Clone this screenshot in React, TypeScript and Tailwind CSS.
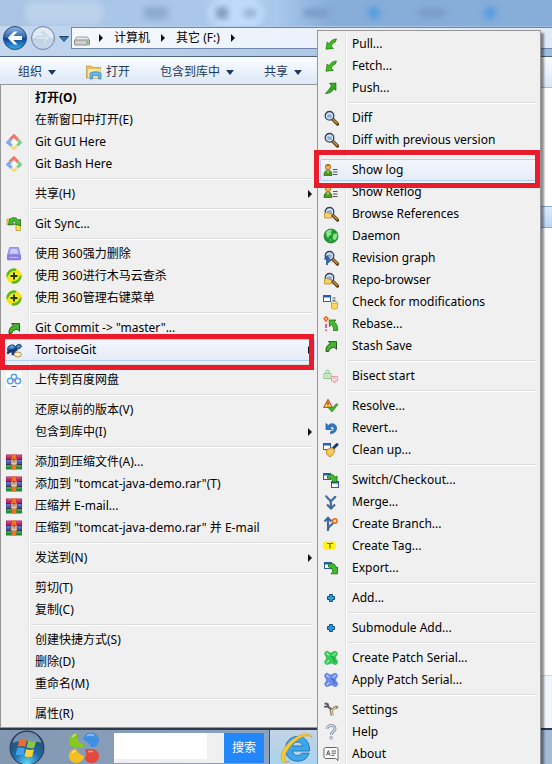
import React from "react";
import clsx from "clsx";

const Svg = ({ children }: { children: React.ReactNode }) => (
  <svg viewBox="0 0 16 16" className="h-4 w-4 shrink-0" aria-hidden="true">
    {children}
  </svg>
);

/* ---------- shared pieces of the icons ---------- */

const Glass = () => (
  <>
    <path d="M9.5 9l5 5" stroke="#5b3a12" strokeWidth="3.2" strokeLinecap="round" />
    <path d="M10 9.2l4 4" stroke="#c9903f" strokeWidth="1.6" strokeLinecap="round" />
    <circle cx="6.5" cy="5.8" r="4.3" fill="#d3e6f8" stroke="#34435a" strokeWidth="1.3" />
    <path d="M4.3 5.2h4.4M4.3 7h4.4" stroke="#5d83b5" strokeWidth="1" />
  </>
);

const Window = ({ x, y }: { x: number; y: number }) => (
  <g>
    <rect x={x + 0.5} y={y + 0.5} width="7" height="6" fill="#fff" stroke="#2f5f9e" />
    <rect x={x} y={y} width="8" height="2.5" fill="#2360a8" />
  </g>
);

const Patch = ({ fill, dark, light }: { fill: string; dark: string; light: string }) => (
  <Svg>
    <path
      d="M3.4 1.3c1.6-.6 2.7 1.8 4.4 1.8 2 0 2.6-2.3 4.8-1.6 2.4.8 1.9 3 .6 4.5-.8 1-.7 2.6.4 3.8 1.5 1.8 1.3 4-.7 4.6-2 .6-3-1.4-4.6-1.4-1.9 0-3 2.1-5 1.3-2.3-.9-1.5-3.3-.4-4.5.9-1 .9-2.3-.2-3.6C1.300 4.400 1.300 2 3.400 1.300z"
      fill={fill}
      stroke={dark}
      strokeWidth=".6"
    />
    <path d="M3.500 3l2.500 2.500M12.500 3L10 5.500M3.800 13l2.400-2.700" stroke={light} strokeWidth="1.400" />
    <path d="M8 6.500a2.600 2.600 0 0 1 2.800 2.700c0 1.500.8 2 1.500 3" fill="none" stroke={dark} strokeWidth="1.200" />
  </Svg>
);

/* ---------- menu icons ---------- */

const DownLeftIcon = () => (
  <Svg>
    <path
      d="M13.400 3c-3.800.2-6.100 1.900-7 4.900L4.200 6 3 13.200l7.400-.8-2.200-1.900c.5-2.500 2.100-3.900 4.200-4.600z"
      fill="#3fbf1f"
      stroke="#257a12"
      strokeWidth=".8"
      strokeLinejoin="round"
    />
  </Svg>
);

const PushIcon = () => (
  <Svg>
    <path
      d="M2.500 13.500c4.400-.1 7-1.900 8.200-4.700l2.200 1.500V3L6.500 3.400l1.900 2C7.500 8.200 5.600 9.800 2.500 13.500z"
      fill="#35a822"
      stroke="#1f6e12"
      strokeWidth=".8"
      strokeLinejoin="round"
    />
  </Svg>
);

const CommitIcon = () => (
  <Svg>
    <path
      d="M3 13.500C2.600 9.600 4.300 7 7.400 5.800L5.500 3.600h8v7.700l-2.200-2.100C8.300 9.600 6.500 10.700 5.600 13.500z"
      fill="#45b52f"
      stroke="#1c4d12"
      strokeWidth=".9"
      strokeLinejoin="round"
    />
  </Svg>
);

const DiffIcon = () => (
  <Svg>
    <Glass />
  </Svg>
);

const BrowseIcon = () => (
  <Svg>
    <Glass />
    <path d="M1.500 7.500l1.500-1h2l1 1h2.500v4.500h-7z" fill="#f7cf63" stroke="#b98218" strokeWidth=".7" />
  </Svg>
);

const RevisionIcon = () => (
  <Svg>
    <Glass />
    <path d="M4 15V7M1.500 9.500L4 6.500l2.500 3M4 13l3.500-3" fill="none" stroke="#2f5fa5" strokeWidth="1.800" />
  </Svg>
);

const LogIcon = () => (
  <Svg>
    <circle cx="5" cy="5" r="2.700" fill="#f2b25c" stroke="#a4641c" strokeWidth=".7" />
    <path d="M2.500 4.500C2.500 2 7.500 1.500 7.500 4L5 3.700z" fill="#9b6a1c" />
    <path d="M1 13.500C1 9.500 2.800 8.200 5 8.200s4 1.300 4 5.300z" fill="#4f9a25" stroke="#2c5a12" strokeWidth=".7" />
    <path d="M4 8.500l1 3 1-3z" fill="#fbe36c" />
    <path d="M10 7.500h4.500M10 10h4.500M10 12.500h4.500" stroke="#555" strokeWidth="1" />
  </Svg>
);

const DaemonIcon = () => (
  <Svg>
    <circle cx="8" cy="8" r="7" fill="#1d9c32" stroke="#136b22" strokeWidth=".7" />
    <path
      d="M3 4c2-2.500 4.500-2.700 6-2L7.500 4.500 9 6l-2.500 1.500L5 10 3.500 7.500zM10.500 6l3.500-.5c1 3-.5 5.500-2.500 7L9.500 10z"
      fill="#8ee48c"
    />
    <path d="M6.500 10.500l2 1-.8 2.500z" fill="#64cf68" />
  </Svg>
);

const ModificationsIcon = () => (
  <Svg>
    <Window x={0} y={1} />
    <path d="M9.500 4h3M9.500 6.300h3" stroke="#555" />
    <path d="M8.500 8.500c0-1 6-1 6 0V14c0 1.300-6 1.300-6 0z" fill="#fbdc62" stroke="#c19523" strokeWidth=".8" />
    <ellipse cx="11.500" cy="8.600" rx="3" ry="1" fill="#fdf0ae" stroke="#c19523" strokeWidth=".6" />
  </Svg>
);

const RebaseIcon = () => (
  <Svg>
    <circle cx="3" cy="2.800" r="1.600" fill="#ffe3a0" stroke="#e2611c" strokeWidth="1.300" />
    <path d="M3 0v1M.3 2.800h1M3 5v1.500M5 2.800h1" stroke="#e2611c" />
    <path d="M3 8v4M3 13.500v1.500" stroke="#e02460" strokeWidth="1.400" />
    <path
      d="M6.200 4h6.600l-1.700 2c2.200 1 3.600 3.500 3.600 8.500h-4.200c.2-3.200-.4-4.800-1.800-5.800L6.500 10.500z"
      fill="#46b92f"
      stroke="#22701a"
      strokeWidth=".8"
    />
  </Svg>
);

const BisectIcon = () => (
  <Svg>
    <path d="M1 5.500h7v5H1zM3 5.500V3c0-1.500 3-1.500 3 0v2.500" fill="#d5efd4" stroke="#8ccb8b" />
    <path d="M8.500 8.500h6v4.500h-2l-1 2-1-2h-2z" fill="#fbe3e3" stroke="#e79a9a" />
    <path d="M10.500 10h2M3.500 8h2" stroke="#c88" strokeWidth=".8" />
  </Svg>
);

const ResolveIcon = () => (
  <Svg>
    <path d="M5 1.500L.8 9.500h8.600z" fill="#ffe14a" stroke="#c8502c" strokeWidth="1.200" strokeLinejoin="round" />
    <path d="M5 4v3M5 7.800v1" stroke="#6b1e10" strokeWidth="1.100" />
    <path d="M5.500 10l3.500 4 6-7.500-1.800-.8L9 10.500 7.500 8.800z" fill="#43b82c" stroke="#207515" strokeWidth=".6" />
  </Svg>
);

const RevertIcon = () => (
  <Svg>
    <path
      d="M3 3.500v6h6L7 7.500c1.500-1.500 4-1 4 1 0 1.500-1.200 2.600-3.500 3.200v2c4-.5 6-2.500 6-5.500 0-4.500-5-6-8.300-2.600z"
      fill="#2e7dc8"
      stroke="#15508c"
      strokeWidth=".7"
      strokeLinejoin="round"
    />
  </Svg>
);

const CleanIcon = () => (
  <Svg>
    <Window x={0} y={1} />
    <path d="M9.500 7L14 2.500" stroke="#1c3b75" strokeWidth="3" strokeLinecap="round" />
    <path d="M3 8l6-2.500 3 2.800-2 4.200-3 2.500-3.200-2.500z" fill="#f7c14a" stroke="#b57a1a" strokeWidth=".8" />
    <path d="M5 9l4 3.500M7 8l3.500 3" stroke="#fbe29a" strokeWidth=".8" />
  </Svg>
);

const SwitchIcon = () => (
  <Svg>
    <Window x={0} y={1} />
    <Window x={8} y={9} />
    <path
      d="M4.500 4c3.500-2.500 6.500-1.500 7.500 1.200L14 4v6H8l2-1.700C9 6.500 7.500 6 4.500 6.500z"
      fill="#46b92f"
      stroke="#1d6815"
      strokeWidth=".8"
    />
  </Svg>
);

const MergeIcon = () => (
  <Svg>
    <path d="M3 1.500c.3 3 4.800 3.500 4.800 7V14M12.500 2c-.3 2.500-4 3-4.500 5.500" fill="none" stroke="#41699f" strokeWidth="2.200" />
    <path d="M4 10.500l4 4 4-4" fill="none" stroke="#41699f" strokeWidth="2.200" />
  </Svg>
);

const BranchIcon = () => (
  <Svg>
    <path d="M5 15V2M1.500 5.500L5 1.800l3.500 3.700M5.500 12.500c0-3 3.700-3 4.300-5.500" fill="none" stroke="#41699f" strokeWidth="2.200" />
    <circle cx="11.800" cy="5" r="2.200" fill="#ffdfa3" stroke="#e0691d" strokeWidth="1.500" />
  </Svg>
);

const TagIcon = () => (
  <Svg>
    <path d="M2 3h9l2.500 4.500L11 12H2L0 10V5z" fill="#fff318" />
    <path d="M4 5.500h6M7 5.500v5" stroke="#6c6710" strokeWidth="1.200" />
  </Svg>
);

const ExportIcon = () => (
  <Svg>
    <Window x={1} y={2} />
    <path
      d="M5.500 4.500C10 2.500 12.500 4 12.800 7.500L14.500 7v6.800H8l1.700-2C9.700 9 8.500 7.500 5.500 7z"
      fill="#46b92f"
      stroke="#1d6815"
      strokeWidth=".8"
    />
  </Svg>
);

const AddIcon = () => (
  <Svg>
    <path d="M6.500 4.500h3v2h2v3h-2v2h-3v-2h-2v-3h2z" fill="#2d9bd8" stroke="#12507f" />
  </Svg>
);

const CreatePatchIcon = () => <Patch fill="#35cf58" dark="#1d9c3c" light="#8bef9c" />;
const ApplyPatchIcon = () => <Patch fill="#6a8eee" dark="#4161c4" light="#b7c9ff" />;

const SettingsIcon = () => (
  <Svg>
    <path d="M1.500 1.500l3 .5 1 3 3 2.500 1 5.500" fill="none" stroke="#6a6259" strokeWidth="2.200" />
    <path d="M9 13.500L8 8.500l5-3.500 2 .8" fill="none" stroke="#8f8268" strokeWidth="2.800" />
    <path d="M9.500 13.500L8.500 8.800 13 5.500" fill="none" stroke="#e5dbbd" strokeWidth="1.200" />
    <path d="M1 4.500L3.500 5 5 3" fill="none" stroke="#494f63" strokeWidth="1.400" />
  </Svg>
);

const HelpIcon = () => (
  <Svg>
    <path d="M4 5c0-5 8.500-4.500 8 0-.3 2.500-3.700 3-3.700 5.800" fill="none" stroke="#7d8a99" strokeWidth="2.800" />
    <path d="M4 5c0-5 8.500-4.500 8 0-.3 2.500-3.700 3-3.700 5.800" fill="none" stroke="#dfe8f1" strokeWidth="1.200" />
    <circle cx="8.200" cy="13.700" r="1.300" fill="#dfe8f1" stroke="#7d8a99" strokeWidth=".8" />
  </Svg>
);

const AboutIcon = () => (
  <Svg>
    <path d="M3 1.500h10.500c1 0 1.500.6 1.500 1.500v11.500l-2.500-2H3c-1.200 0-2-.7-2-1.700V3.200c0-1 .8-1.700 2-1.700z" fill="#fff" stroke="#666" />
    <path d="M3.500 9.500l1.800-5 1.800 5M4.200 8h2.300M8.500 5h4.500M8.500 7.200h4.500M8.500 9.400h3" fill="none" stroke="#444" strokeWidth=".9" />
  </Svg>
);

const GitIcon = () => (
  <Svg>
    <path d="M3.500 6L8 1.800 12 6" fill="none" stroke="#f0776b" strokeWidth="3" />
    <path d="M4.800 5.800L1.800 8.500l4 3.300" fill="none" stroke="#82a9ee" strokeWidth="3" />
    <path d="M11.500 5.500l3 3-3.300 3" fill="none" stroke="#79cf86" strokeWidth="2.800" />
    <path d="M5 12.500l3 2.300 3-2.800" fill="none" stroke="#f9dc78" strokeWidth="2.600" />
    <path d="M8 6v5M8 7l2.500 2" stroke="#fff" strokeWidth="1.300" />
  </Svg>
);

const SyncIcon = () => (
  <Svg>
    <path d="M1 3h4v5.500H1zM10 8.500h4.500v6H10z" fill="#f9e45a" stroke="#b59a1c" strokeWidth=".8" />
    <path d="M3.500 3.500C7 .5 11 1.500 12 4l2.500-.5v6.200L8.500 8l1.800-1.500C9 5 7.500 5 6.500 5.800L8 8.500 2.500 9z" fill="#46b92f" stroke="#1d6815" strokeWidth=".8" />
  </Svg>
);

const ShredIcon = () => (
  <Svg>
    <path d="M3.500 1.500h9l1.500 6v5.500H2V7.500z" fill="#a6a0f2" stroke="#8a83dc" strokeWidth=".8" />
    <path d="M1 8.500h14v4.500c0 .8-.6 1.200-1.300 1.200H2.300c-.7 0-1.300-.4-1.300-1.200z" fill="#847cdf" />
    <path d="M5 3h6l1 4.500H4z" fill="#cfccfa" />
    <path d="M3.500 11.500h9" stroke="#bdb8f6" strokeWidth="1.200" />
  </Svg>
);

const Shield360Icon = () => (
  <Svg>
    <circle cx="8" cy="8" r="7.600" fill="#f8e00c" />
    <path d="M.6 9.500A7.600 7.600 0 0 1 10.500.8L9 4C5 3.500 3.500 6 .6 9.500zM15.400 6.500a7.600 7.600 0 0 1-9.900 8.700L7 12c4 .5 5.500-2 8.400-5.500z" fill="#5ab81e" />
    <circle cx="8" cy="8" r="5" fill="#fbe81c" />
    <path d="M8 4.500v7M4.500 8h7" stroke="#213d10" strokeWidth="2" />
  </Svg>
);

const TortoiseIcon = () => (
  <Svg>
    <path d="M1.500 6.500C2.500 3 7 1.500 9.500 4.500l1 2.500-8 2z" fill="#2d6fb8" stroke="#102a52" strokeWidth=".9" />
    <path d="M9.800 5c.5-3 5-3.600 5.500-1 .1 1.800-1.700 2.500-3.800 3.300z" fill="#3f87cc" stroke="#102a52" strokeWidth=".9" />
    <path d="M1 8l9.500-1.500 1 2L9 10l-1.500 3.500-2-.5.300-2.500-2.300.5-1.500 1.500L.5 11l1-1.500z" fill="#163a70" />
    <path d="M3.500 5.500l2-1.500 2.500 1M5.500 4l.5 3" fill="none" stroke="#8fc3ec" strokeWidth=".7" />
    <ellipse cx="11.800" cy="12.500" rx="3.600" ry="2.500" fill="#f9ecc0" stroke="#b1823b" strokeWidth=".9" />
  </Svg>
);

const BaiduIcon = () => (
  <Svg>
    <rect width="16" height="16" fill="#fff" />
    <circle cx="8" cy="4.800" r="2.600" fill="none" stroke="#5b9ceb" strokeWidth="1.500" />
    <circle cx="4.200" cy="9" r="2.700" fill="none" stroke="#4fa6ef" strokeWidth="1.500" />
    <circle cx="11.800" cy="9" r="2.700" fill="none" stroke="#5b9ceb" strokeWidth="1.500" />
    <circle cx="8" cy="8.500" r=".9" fill="#e8707c" />
    <path d="M5.500 14.500h5" stroke="#555" strokeWidth=".9" />
  </Svg>
);

const RarIcon = () => (
  <Svg>
    <rect y=".5" width="16" height="5" fill="#b8255f" />
    <rect y="5.500" width="16" height="5" fill="#3c56b4" />
    <rect y="10.500" width="16" height="5" fill="#1f8a3c" />
    <path d="M0 5.500h16M0 10.500h16" stroke="#2a1b3a" strokeWidth=".8" />
    <path d="M1 2h4M11 2h4" stroke="#e3719a" strokeWidth=".9" />
    <path d="M1 7h3M12 7h3" stroke="#8ea4ea" strokeWidth=".9" />
    <path d="M1 12h4M11 12h4" stroke="#63cc7a" strokeWidth=".9" />
    <rect x="5.700" y=".5" width="4.600" height="15" fill="#ee7420" />
    <rect x="4.500" y="5" width="7" height="5.800" fill="#8e4a2a" />
    <path d="M6 5.500v4.500h4V5.500M8 6.500v3" fill="none" stroke="#f6f0e4" strokeWidth="1.100" />
  </Svg>
);

/* ---------- menus ---------- */

type Item = {
  label: string;
  icon?: React.FC;
  sub?: boolean;
  bold?: boolean;
  marked?: boolean;
};

// every inner list is one group, groups are split by a separator
const fileMenu: Item[][] = [
  [
    { label: "打开(O)", bold: true },
    { label: "在新窗口中打开(E)" },
    { label: "Git GUI Here", icon: GitIcon },
    { label: "Git Bash Here", icon: GitIcon },
  ],
  [{ label: "共享(H)", sub: true }],
  [{ label: "Git Sync...", icon: SyncIcon }],
  [
    { label: "使用 360强力删除", icon: ShredIcon },
    { label: "使用 360进行木马云查杀", icon: Shield360Icon },
    { label: "使用 360管理右键菜单", icon: Shield360Icon },
  ],
  [
    { label: 'Git Commit -> "master"...', icon: CommitIcon },
    { label: "TortoiseGit", icon: TortoiseIcon, sub: true, marked: true },
  ],
  [{ label: "上传到百度网盘", icon: BaiduIcon }],
  [{ label: "还原以前的版本(V)" }, { label: "包含到库中(I)", sub: true }],
  [
    { label: "添加到压缩文件(A)...", icon: RarIcon },
    { label: '添加到 "tomcat-java-demo.rar"(T)', icon: RarIcon },
    { label: "压缩并 E-mail...", icon: RarIcon },
    { label: '压缩到 "tomcat-java-demo.rar" 并 E-mail', icon: RarIcon },
  ],
  [{ label: "发送到(N)", sub: true }],
  [{ label: "剪切(T)" }, { label: "复制(C)" }],
  [{ label: "创建快捷方式(S)" }, { label: "删除(D)" }, { label: "重命名(M)" }],
  [{ label: "属性(R)" }],
];

const gitMenu: Item[][] = [
  [
    { label: "Pull...", icon: DownLeftIcon },
    { label: "Fetch...", icon: DownLeftIcon },
    { label: "Push...", icon: PushIcon },
  ],
  [
    { label: "Diff", icon: DiffIcon },
    { label: "Diff with previous version", icon: DiffIcon },
  ],
  [
    { label: "Show log", icon: LogIcon, marked: true },
    { label: "Show Reflog", icon: LogIcon },
    { label: "Browse References", icon: BrowseIcon },
    { label: "Daemon", icon: DaemonIcon },
    { label: "Revision graph", icon: RevisionIcon },
    { label: "Repo-browser", icon: BrowseIcon },
    { label: "Check for modifications", icon: ModificationsIcon },
    { label: "Rebase...", icon: RebaseIcon },
    { label: "Stash Save", icon: CommitIcon },
  ],
  [{ label: "Bisect start", icon: BisectIcon }],
  [
    { label: "Resolve...", icon: ResolveIcon },
    { label: "Revert...", icon: RevertIcon },
    { label: "Clean up...", icon: CleanIcon },
  ],
  [
    { label: "Switch/Checkout...", icon: SwitchIcon },
    { label: "Merge...", icon: MergeIcon },
    { label: "Create Branch...", icon: BranchIcon },
    { label: "Create Tag...", icon: TagIcon },
    { label: "Export...", icon: ExportIcon },
  ],
  [{ label: "Add...", icon: AddIcon }],
  [{ label: "Submodule Add...", icon: AddIcon }],
  [
    { label: "Create Patch Serial...", icon: CreatePatchIcon },
    { label: "Apply Patch Serial...", icon: ApplyPatchIcon },
  ],
  [
    { label: "Settings", icon: SettingsIcon },
    { label: "Help", icon: HelpIcon },
    { label: "About", icon: AboutIcon },
  ],
];

const Menu = ({ groups, className, mark }: { groups: Item[][]; className: string; mark: string }) => (
  <div role="menu" className={clsx("absolute border border-[#979797] bg-[#f0f0f0] py-[2px]", className)}>
    <div className="absolute inset-y-[2px] left-[27px] w-[2px] border-l border-[#e2e3e3] bg-white" />
    {groups.map((group, i) => (
      <div key={i} className="relative">
        {i > 0 && (
          <div role="separator" className="mr-1 ml-[30px] h-2 pt-[3px]">
            <div className="h-[2px] border-t border-[#dcdcdc] bg-white" />
          </div>
        )}
        {group.map((item) => (
          <button
            key={item.label}
            role="menuitem"
            className="relative flex h-[22px] w-full items-center pr-[5px] pl-[5px] text-left whitespace-nowrap"
          >
            {item.marked && (
              <span className="absolute inset-x-[2px] inset-y-0 rounded-[2px] border border-[#aecff7] bg-linear-to-b from-[#f3f5fb] to-[#e6ecf8]" />
            )}
            <span className="relative flex w-[29px] shrink-0">{item.icon && <item.icon />}</span>
            <span className={clsx("relative flex-1", item.bold && "font-bold")}>{item.label}</span>
            {item.sub && (
              <svg viewBox="0 0 4 8" className="relative h-2 w-1" aria-hidden="true">
                <path d="M0 0l4 4-4 4z" fill="#111" />
              </svg>
            )}
            {item.marked && <span className={clsx("absolute z-10 border-[5px] border-[#e81c2c]", mark)} />}
          </button>
        ))}
      </div>
    ))}
  </div>
);

/* ---------- explorer window ---------- */

const Crumb = () => (
  <svg viewBox="0 0 4 8" className="h-2 w-1" aria-hidden="true">
    <path d="M0 0l4 4-4 4z" fill="#111" />
  </svg>
);

const Caret = () => (
  <svg viewBox="0 0 8 5" className="h-[5px] w-2" aria-hidden="true">
    <path d="M0 0h8L4 5z" fill="#1e3a5f" />
  </svg>
);

const TitleBar = () => (
  <div className="h-[26px] overflow-hidden bg-linear-to-r from-[#a9c4e4] from-0% via-[#a9c8ec] via-50% to-[#87add9] to-60%">
    <div className="flex h-full items-center gap-10 pl-6 blur-[3px]">
      <span className="h-6 w-20 shrink-0 rounded-full bg-[#bcd2ec]" />
      <span className="h-3 w-6 shrink-0 bg-[#8ba9cd]" />
      <span className="flex h-8 w-14 shrink-0 items-center justify-around rounded-full bg-[#bfdcfb]">
        <span className="h-3 w-3 bg-[#7f9cc0]" />
        <span className="h-2 w-3 bg-[#93aed0]" />
      </span>
      <span className="h-2 w-6 shrink-0 bg-[#7799c4]" />
      <span className="h-3 w-3 shrink-0 rounded-full bg-[#4f9be0]" />
      <span className="h-2 w-6 shrink-0 bg-[#7799c4]" />
      <span className="h-3 w-3 shrink-0 rounded-full bg-[#4f9be0]" />
    </div>
  </div>
);

const NavBar = () => (
  <div className="flex h-[30px] items-start bg-linear-to-r from-[#c3d7ee] to-[#9fbce0] pl-[3px]">
    <button aria-label="Back" className="h-6 w-6">
      <svg viewBox="0 0 24 24" className="h-6 w-6">
        <defs>
          <linearGradient id="back" x1="0" y1="0" x2="0" y2="1">
            <stop offset="0" stopColor="#8fb4e2" />
            <stop offset=".48" stopColor="#2f66b4" />
            <stop offset=".5" stopColor="#0c3f92" />
            <stop offset="1" stopColor="#35b0ee" />
          </linearGradient>
        </defs>
        <circle cx="12" cy="12" r="11.500" fill="url(#back)" stroke="#29446f" />
        <path d="M11 5.500L4.800 12l6.200 6.500h3.500L10.300 14H19v-4h-8.700l4.200-4.500z" fill="#fff" />
      </svg>
    </button>
    <button aria-label="Forward" className="ml-1 h-6 w-6">
      <svg viewBox="0 0 24 24" className="h-6 w-6">
        <circle cx="12" cy="12" r="11.500" fill="#c5d5e8" stroke="#71849f" />
        <path d="M1.500 12a10.500 10.500 0 0 1 21 0z" fill="#e2eaf4" />
        <path d="M13 6l6 6-6 6h-3l4-4.300H5v-3.400h9L10 6z" fill="#d9e3ef" stroke="#b5c4d8" strokeWidth=".7" />
      </svg>
    </button>
    <button aria-label="Recent pages" className="mt-[10px] ml-1 w-[10px]">
      <svg viewBox="0 0 10 6" className="h-[6px] w-[10px]">
        <path d="M.5.500h9L5 5.500z" fill="#3a7ab8" stroke="#22456f" />
      </svg>
    </button>
    <div className="mt-px ml-[2px] flex h-[22px] flex-1 items-center border border-r-0 border-[#6f87a8] bg-linear-to-r from-[#f5f9fe] to-[#dfeaf8] pl-[2px]">
      <svg viewBox="0 0 16 16" className="mt-1 h-4 w-4" aria-hidden="true">
        <path d="M2.500 5h11L15.500 9H.5z" fill="#e9e9e9" stroke="#8a8a8a" strokeWidth=".8" />
        <rect x=".5" y="8" width="15" height="5" rx="1" fill="#cfcfcf" stroke="#777" strokeWidth=".8" />
        <rect x="12.500" y="9.500" width="2" height="2" fill="#58b93b" />
      </svg>
      <nav className="flex items-center gap-[11px] pl-[9px] text-black">
        <Crumb />
        <a href="#computer">计算机</a>
        <Crumb />
        <a href="#f">其它 (F:)</a>
        <Crumb />
      </nav>
    </div>
  </div>
);

const Toolbar = () => (
  <div className="flex h-8 items-start border-y border-t-[#4d6384] border-b-[#a9bcd4] bg-linear-to-b from-[#fbfdff] via-[#e9f1fb] to-[#d9e6f5] pt-[5px] pl-[18px] whitespace-nowrap text-[#1e395b]">
    <button className="flex h-5 items-center gap-[6px]">
      组织 <Caret />
    </button>
    <button className="ml-[30px] flex h-5 items-center gap-1">
      <svg viewBox="0 0 16 16" className="h-4 w-4" aria-hidden="true">
        <path d="M.5 2h5l1.500 1.500h7.500V14H.5z" fill="#eebf55" stroke="#c59234" strokeWidth=".7" />
        <path d="M2 5h12.500v8.500H2z" fill="#fbe9a6" />
        <path d="M4 15V9.500C4 7.500 15 7 15 9.500V15h-2.500v-3.500h-6V15z" fill="#63b8e8" stroke="#2f81b8" strokeWidth=".7" />
      </svg>
      打开
    </button>
    <button className="ml-[30px] flex h-5 items-center gap-[6px]">
      包含到库中 <Caret />
    </button>
    <button className="ml-[30px] flex h-5 items-center gap-[6px]">
      共享 <Caret />
    </button>
  </div>
);

const Taskbar = () => (
  <div className="flex h-9 items-start border-t-2 border-[#2e3a4a] bg-linear-to-r from-[#8398b2] via-[#8ba3bf] to-[#a3bcd8] pl-[9px]">
    <button aria-label="Start" className="h-9 w-9">
      <svg viewBox="0 0 36 36" className="h-9 w-9">
        <defs>
          <radialGradient id="orb" cx=".5" cy=".95" r=".9">
            <stop offset="0" stopColor="#5fd6f7" />
            <stop offset=".45" stopColor="#1d6aa5" />
            <stop offset="1" stopColor="#2b4666" />
          </radialGradient>
        </defs>
        <circle cx="18" cy="18" r="17" fill="url(#orb)" stroke="#24384f" />
        <path d="M3.500 13C6 4.500 12 2 18 2s12 2.500 14.500 11c-8-3-21-3-29 0z" fill="#b9cbdc" opacity=".55" />
        <path d="M10.500 9.500c2.800-1.300 5-1 7.300.2l-1.600 7.200c-2.500-1.200-4.700-1.400-7.500-.2z" fill="#ef6a2c" />
        <path d="M19.200 10.300c2.600 1.300 5 1.300 8 .1l-1.800 7c-2.800 1.200-5.200 1.100-7.800-.2z" fill="#8cc63f" />
        <path d="M8.300 18.200c2.700-1.100 5-.9 7.500.3l-1.700 7.200c-2.500-1.200-4.800-1.400-7.600-.2z" fill="#3fa3e8" />
        <path d="M17.200 19c2.600 1.300 5 1.300 7.800.2l-1.800 7.200c-2.800 1.200-5.100 1-7.700-.3z" fill="#fcd03a" />
      </svg>
    </button>
    <button aria-label="Browser" className="mt-[2px] ml-[23px] h-8 w-8">
      <svg viewBox="0 0 32 32" className="h-8 w-8">
        <path d="M9 1C4 1.500.8 5 1 9.500 1.200 14 5 16 9 15.500h6V12C10 11 8.500 6 9 1z" fill="#86c81e" />
        <path d="M15.500 7.500C15.500 3 19 .8 23 .8S31 4 31 8s-3.500 7.500-7.500 7.500c-1.500-3.500-4.500-6-8-8z" fill="#3f8fe4" />
        <path d="M1 24c0-4 3-7 7-7 1.500 3.500 4.500 6 8 7-.5 4-3.500 7-7.500 7S1 28 1 24z" fill="#f6bf1d" />
        <path d="M16.500 17H24c4 0 7 3 7 7s-3 7-7 7-6.500-2-7-5c1.800-3 1.500-6-.5-9z" fill="#e2483c" />
        <path d="M4 5c2-2 3-2.500 4-2.500M19 4c2-1.500 5-1.500 7 0M4 21c1-1.500 2-2 3.500-2M20 19.500h5" stroke="#fff" strokeWidth="1.500" opacity=".5" fill="none" />
      </svg>
    </button>
    <form className="mt-[3px] ml-[14px] flex h-[30px] bg-[#f0f0f0]">
      <input aria-label="搜索" className="h-[26px] w-[93px] bg-white px-1 outline-none" />
      <button type="button" className="ml-[17px] w-10 bg-[#2187fb] text-white">
        搜索
      </button>
    </form>
    <button aria-label="Internet Explorer" className="ml-[5px] flex h-9 w-16 border-l border-[#3d4c5f] bg-linear-to-b from-[#c3d3e4] to-[#a8d4ee] pt-[2px] pl-[10px]">
      <svg viewBox="0 0 34 32" className="h-8 w-[34px]">
        <path
          d="M29.500 19H12.500c.3 3 2.300 4.500 5 4.500 2 0 3.500-.8 4.300-2.300h7.200c-1.500 5-5.500 8-11.500 8C10 29.200 5.500 24 5.500 17S10 4.500 17.500 4.500 30 10 29.500 19zM12.600 14h9.800c-.3-2.600-2-4-4.800-4s-4.600 1.400-5 4z"
          fill="#3fa6e8"
          stroke="#1a6fb5"
          strokeWidth=".9"
        />
        <path d="M32 5.500C31 .5 22 1 14 6.500 5 12.500-.5 22 1.500 28c1 3 4.500 3 8 1.300-3 .7-4.700-.3-4.800-2.800C4.500 21 10 13 17 8c5.500-4 12-5.800 15-2.500z" fill="#f8cb35" stroke="#d49a17" strokeWidth=".6" />
      </svg>
    </button>
  </div>
);

const App = () => {
  return (
    <div className="relative flex min-h-screen w-full flex-col overflow-hidden bg-white font-['Noto_Sans','Noto_Sans_CJK_SC',sans-serif] text-[12px] leading-4 text-black">
      <TitleBar />
      <NavBar />
      <Toolbar />
      <main className="flex flex-1 flex-col pt-[118px]">
        <div className="h-[22px] border-y border-[#84acdd] bg-linear-to-b from-[#dceafb] to-[#b9d5f6]" />
        <div className="flex-1" />
        <div className="h-[53px] border-t border-[#cdd8e8] bg-[#f0f4fb]" />
      </main>
      <Taskbar />
      <Menu groups={fileMenu} className="top-[84px] left-0 w-[318px]" mark="-left-px -top-[5px] -bottom-[9px] right-[3px]" />
      <Menu
        groups={gitMenu}
        className="top-[30px] left-[317px] w-[224px] shadow-[3px_3px_2px_rgba(0,0,0,0.45)]"
        mark="-left-1 -top-[9px] -bottom-[7px] right-0"
      />
    </div>
  );
};

export default App;
